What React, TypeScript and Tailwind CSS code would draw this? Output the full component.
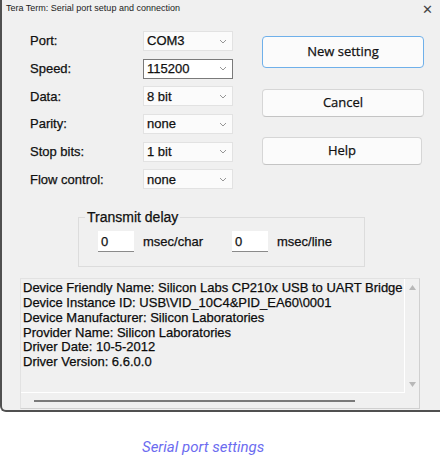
import React from 'react';

const fields = [
  { label: 'Port:', value: 'COM3' },
  { label: 'Speed:', value: '115200', focus: true },
  { label: 'Data:', value: '8 bit' },
  { label: 'Parity:', value: 'none' },
  { label: 'Stop bits:', value: '1 bit' },
  { label: 'Flow control:', value: 'none' },
];

const info = [
  'Device Friendly Name: Silicon Labs CP210x USB to UART Bridge',
  'Device Instance ID: USB\\VID_10C4&PID_EA60\\0001',
  'Device Manufacturer: Silicon Laboratories',
  'Provider Name: Silicon Laboratories',
  'Driver Date: 10-5-2012',
  'Driver Version: 6.6.0.0',
];

function Chevron() {
  return (
    <svg width="8" height="5" viewBox="0 0 8 5" className="shrink-0">
      <path d="M1 1 L4 4 L7 1" fill="none" stroke="#8a8a8a" strokeWidth="0.9" />
    </svg>
  );
}

function Select({ value, focus }: { value: string; focus?: boolean }) {
  return (
    <div
      className={
        'flex h-[20px] w-[90px] items-center justify-between pl-[3px] pr-[5px] ' +
        (focus
          ? 'border border-[#7a7a7a] bg-white'
          : 'border border-[#e2e2e2] bg-[#fbfbfb]')
      }
    >
      <span>{value}</span>
      <Chevron />
    </div>
  );
}

function Button({ children, primary, w = 'w-[162px]', h = 'h-[28px]' }: { children: React.ReactNode; primary?: boolean; w?: string; h?: string }) {
  return (
    <div
      className={
        `flex ${w} ${h} items-center justify-center rounded-[4px] bg-[#fbfbfb] text-[13px] text-[#111] ` +
        (primary ? 'border border-[#6fb0ea]' : 'border border-[#d6d6d6] border-b-[#c4c4c4]')
      }
      style={{ fontFamily: '"Open Sans", "Noto Sans", sans-serif' }}
    >
      {children}
    </div>
  );
}

export default function App() {
  return (
    <div className="h-[457px] w-[440px] bg-white" style={{ fontFamily: '"Liberation Sans", Arial, sans-serif' }}>
      <div className="h-[412px] rounded-bl-[6px] border-b-2 border-l-2 border-[#505050] bg-[#f0f0f0] text-[13px] text-[#111]">
        <div className="flex h-[18px] items-center justify-between pl-[4px] pr-[7px]">
          <span className="text-[9px] text-[#222]">Tera Term: Serial port setup and connection</span>
          <span className="text-[13px] leading-none text-[#444]">✕</span>
        </div>

        <div className="[-webkit-text-stroke:0.25px_#111]">
          <div className="flex">
            <div className="mt-[13px] flex flex-col gap-[7.7px] pl-[28px]">
              {fields.map((f) => (
                <div key={f.label} className="flex h-[20px] items-center">
                  <span className="w-[113px]">{f.label}</span>
                  <Select value={f.value} focus={f.focus} />
                </div>
              ))}
            </div>
            <div className="ml-[29px] mt-[18px] flex flex-col">
              <Button primary h="h-[32px]">New setting</Button>
              <div className="mt-[21px]">
                <Button>Cancel</Button>
              </div>
              <div className="mt-[20px]">
                <Button w="w-[160px]">Help</Button>
              </div>
            </div>
          </div>

          <fieldset className="ml-[76px] mt-[20px] h-[58px] w-[287px] border border-[#dcdcdc]">
            <legend className="ml-[6px] px-[2px] text-[14px] leading-[16px]">Transmit delay</legend>
            <div className="ml-[19px] mt-[6px] flex items-center">
              <div className="h-[21px] w-[36px] border-b border-[#8a8a8a] bg-white pl-[3px] pt-[1px]">0</div>
              <span className="ml-[9px] w-[89px]">msec/char</span>
              <div className="h-[21px] w-[36px] border-b border-[#8a8a8a] bg-white pl-[3px] pt-[1px]">0</div>
              <span className="ml-[9px]">msec/line</span>
            </div>
          </fieldset>

          <div className="ml-[18px] mt-[11px] w-[400px] border border-[#e2e2e2] border-b-[#d0d0d0] border-r-[#d0d0d0]">
            <div className="flex h-[114px]">
              <div className="flex-1 border-b border-r border-white pl-[2px] pt-[2px] leading-[14.7px] text-[#0a0a0a]">
                {info.map((l) => (
                  <div key={l} className="whitespace-nowrap">{l}</div>
                ))}
              </div>
              <div className="flex w-[14px] flex-col items-center justify-between pb-[6px] pt-[6px]">
                <svg width="7" height="5" viewBox="0 0 7 5"><path d="M0 5 L3.5 0 L7 5 Z" fill="#b8b8b8" /></svg>
                <svg width="7" height="5" viewBox="0 0 7 5"><path d="M0 0 L3.5 5 L7 0 Z" fill="#b8b8b8" /></svg>
              </div>
            </div>
            <div className="flex h-[15px] items-center pl-[13px]">
              <div className="h-[2px] w-[321px] bg-[#7a7a7a]" />
            </div>
          </div>
        </div>
      </div>

      <div
        className="mt-[24px] pl-[142px] text-[15px] italic text-[#6c6cf0]"
        style={{ fontFamily: 'Roboto, sans-serif' }}
      >
        Serial port settings
      </div>
    </div>
  );
}
